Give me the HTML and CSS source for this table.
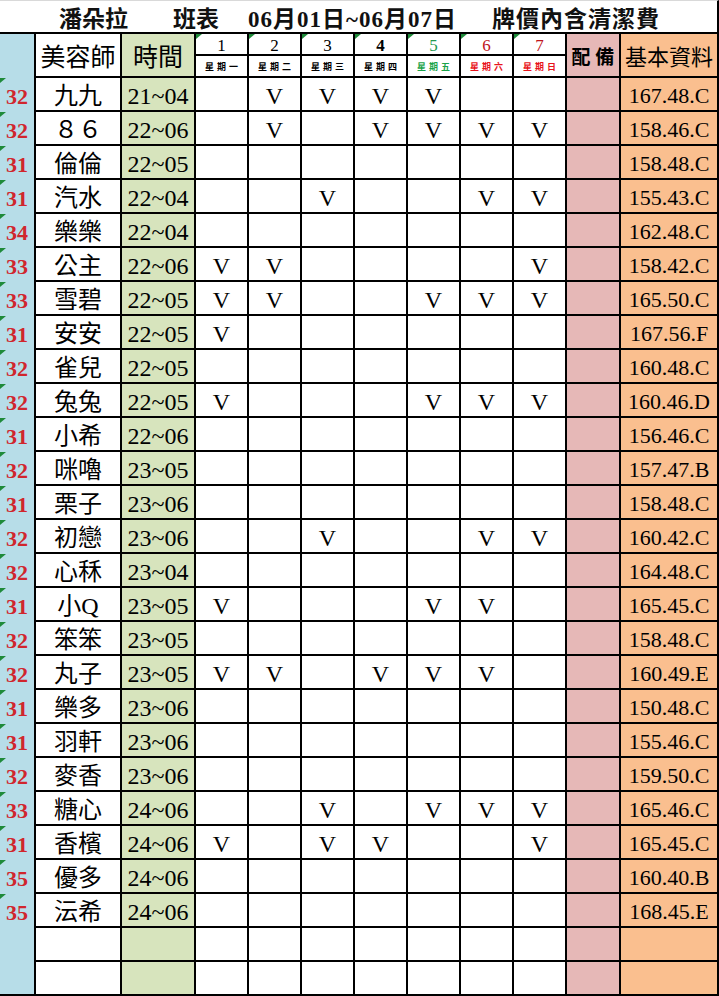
FILE: index.html
```html
<!DOCTYPE html>
<html lang="zh-Hant">
<head>
<meta charset="utf-8">
<title>潘朵拉 班表</title>
<link rel="stylesheet" href="styles.css">
</head>
<body>
<div class="sheet">
  <div class="title">
    <span></span>
    <span class="t-name">潘朵拉</span>
    <span class="t-name">班表</span>
    <span class="t-date">06月01日~06月07日</span>
    <span class="t-note">牌價內含清潔費</span>
  </div>

  <div class="head">
    <div class="c n hn"></div>
    <div class="c hname">美容師</div>
    <div class="c htime t">時間</div>
    <div class="c dn tri">1</div>
    <div class="c dn tri">2</div>
    <div class="c dn tri">3</div>
    <div class="c dn tri bold">4</div>
    <div class="c dn tri green">5</div>
    <div class="c dn tri red">6</div>
    <div class="c dn tri red">7</div>
    <div class="c hp p">配 備</div>
    <div class="c hb b">基本資料</div>
    <div class="c wd">星期一</div>
    <div class="c wd">星期二</div>
    <div class="c wd">星期三</div>
    <div class="c wd">星期四</div>
    <div class="c wd wgreen">星期五</div>
    <div class="c wd wred">星期六</div>
    <div class="c wd wred">星期日</div>
  </div>

  <div class="row"><div class="c n tri">32</div><div class="c nm">九九</div><div class="c t">21~04</div><div class="c d"></div><div class="c d">V</div><div class="c d">V</div><div class="c d">V</div><div class="c d">V</div><div class="c d"></div><div class="c d"></div><div class="c p"></div><div class="c b">167.48.C</div></div>
  <div class="row"><div class="c n tri">32</div><div class="c nm">８６</div><div class="c t">22~06</div><div class="c d"></div><div class="c d">V</div><div class="c d"></div><div class="c d">V</div><div class="c d">V</div><div class="c d">V</div><div class="c d">V</div><div class="c p"></div><div class="c b">158.46.C</div></div>
  <div class="row"><div class="c n tri">31</div><div class="c nm">倫倫</div><div class="c t">22~05</div><div class="c d"></div><div class="c d"></div><div class="c d"></div><div class="c d"></div><div class="c d"></div><div class="c d"></div><div class="c d"></div><div class="c p"></div><div class="c b">158.48.C</div></div>
  <div class="row"><div class="c n tri">31</div><div class="c nm">汽水</div><div class="c t">22~04</div><div class="c d"></div><div class="c d"></div><div class="c d">V</div><div class="c d"></div><div class="c d"></div><div class="c d">V</div><div class="c d">V</div><div class="c p"></div><div class="c b">155.43.C</div></div>
  <div class="row"><div class="c n tri">34</div><div class="c nm">樂樂</div><div class="c t">22~04</div><div class="c d"></div><div class="c d"></div><div class="c d"></div><div class="c d"></div><div class="c d"></div><div class="c d"></div><div class="c d"></div><div class="c p"></div><div class="c b">162.48.C</div></div>
  <div class="row"><div class="c n tri">33</div><div class="c nm">公主</div><div class="c t">22~06</div><div class="c d">V</div><div class="c d">V</div><div class="c d"></div><div class="c d"></div><div class="c d"></div><div class="c d"></div><div class="c d">V</div><div class="c p"></div><div class="c b">158.42.C</div></div>
  <div class="row"><div class="c n tri">33</div><div class="c nm">雪碧</div><div class="c t">22~05</div><div class="c d">V</div><div class="c d">V</div><div class="c d"></div><div class="c d"></div><div class="c d">V</div><div class="c d">V</div><div class="c d">V</div><div class="c p"></div><div class="c b">165.50.C</div></div>
  <div class="row"><div class="c n tri">31</div><div class="c nm">安安</div><div class="c t">22~05</div><div class="c d">V</div><div class="c d"></div><div class="c d"></div><div class="c d"></div><div class="c d"></div><div class="c d"></div><div class="c d"></div><div class="c p"></div><div class="c b">167.56.F</div></div>
  <div class="row"><div class="c n tri">32</div><div class="c nm">雀兒</div><div class="c t">22~05</div><div class="c d"></div><div class="c d"></div><div class="c d"></div><div class="c d"></div><div class="c d"></div><div class="c d"></div><div class="c d"></div><div class="c p"></div><div class="c b">160.48.C</div></div>
  <div class="row"><div class="c n tri">32</div><div class="c nm">兔兔</div><div class="c t">22~05</div><div class="c d">V</div><div class="c d"></div><div class="c d"></div><div class="c d"></div><div class="c d">V</div><div class="c d">V</div><div class="c d">V</div><div class="c p"></div><div class="c b">160.46.D</div></div>
  <div class="row"><div class="c n tri">31</div><div class="c nm">小希</div><div class="c t">22~06</div><div class="c d"></div><div class="c d"></div><div class="c d"></div><div class="c d"></div><div class="c d"></div><div class="c d"></div><div class="c d"></div><div class="c p"></div><div class="c b">156.46.C</div></div>
  <div class="row"><div class="c n tri">32</div><div class="c nm">咪嚕</div><div class="c t">23~05</div><div class="c d"></div><div class="c d"></div><div class="c d"></div><div class="c d"></div><div class="c d"></div><div class="c d"></div><div class="c d"></div><div class="c p"></div><div class="c b">157.47.B</div></div>
  <div class="row"><div class="c n tri">31</div><div class="c nm">栗子</div><div class="c t">23~06</div><div class="c d"></div><div class="c d"></div><div class="c d"></div><div class="c d"></div><div class="c d"></div><div class="c d"></div><div class="c d"></div><div class="c p"></div><div class="c b">158.48.C</div></div>
  <div class="row"><div class="c n tri">32</div><div class="c nm">初戀</div><div class="c t">23~06</div><div class="c d"></div><div class="c d"></div><div class="c d">V</div><div class="c d"></div><div class="c d"></div><div class="c d">V</div><div class="c d">V</div><div class="c p"></div><div class="c b">160.42.C</div></div>
  <div class="row"><div class="c n tri">32</div><div class="c nm">心秝</div><div class="c t">23~04</div><div class="c d"></div><div class="c d"></div><div class="c d"></div><div class="c d"></div><div class="c d"></div><div class="c d"></div><div class="c d"></div><div class="c p"></div><div class="c b">164.48.C</div></div>
  <div class="row"><div class="c n tri">31</div><div class="c nm">小Q</div><div class="c t">23~05</div><div class="c d">V</div><div class="c d"></div><div class="c d"></div><div class="c d"></div><div class="c d">V</div><div class="c d">V</div><div class="c d"></div><div class="c p"></div><div class="c b">165.45.C</div></div>
  <div class="row"><div class="c n tri">32</div><div class="c nm">笨笨</div><div class="c t">23~05</div><div class="c d"></div><div class="c d"></div><div class="c d"></div><div class="c d"></div><div class="c d"></div><div class="c d"></div><div class="c d"></div><div class="c p"></div><div class="c b">158.48.C</div></div>
  <div class="row"><div class="c n tri">32</div><div class="c nm">丸子</div><div class="c t">23~05</div><div class="c d">V</div><div class="c d">V</div><div class="c d"></div><div class="c d">V</div><div class="c d">V</div><div class="c d">V</div><div class="c d"></div><div class="c p"></div><div class="c b">160.49.E</div></div>
  <div class="row"><div class="c n tri">31</div><div class="c nm">樂多</div><div class="c t">23~06</div><div class="c d"></div><div class="c d"></div><div class="c d"></div><div class="c d"></div><div class="c d"></div><div class="c d"></div><div class="c d"></div><div class="c p"></div><div class="c b">150.48.C</div></div>
  <div class="row"><div class="c n tri">31</div><div class="c nm">羽軒</div><div class="c t">23~06</div><div class="c d"></div><div class="c d"></div><div class="c d"></div><div class="c d"></div><div class="c d"></div><div class="c d"></div><div class="c d"></div><div class="c p"></div><div class="c b">155.46.C</div></div>
  <div class="row"><div class="c n tri">32</div><div class="c nm">麥香</div><div class="c t">23~06</div><div class="c d"></div><div class="c d"></div><div class="c d"></div><div class="c d"></div><div class="c d"></div><div class="c d"></div><div class="c d"></div><div class="c p"></div><div class="c b">159.50.C</div></div>
  <div class="row"><div class="c n tri">33</div><div class="c nm">糖心</div><div class="c t">24~06</div><div class="c d"></div><div class="c d"></div><div class="c d">V</div><div class="c d"></div><div class="c d">V</div><div class="c d">V</div><div class="c d">V</div><div class="c p"></div><div class="c b">165.46.C</div></div>
  <div class="row"><div class="c n tri">31</div><div class="c nm">香檳</div><div class="c t">24~06</div><div class="c d">V</div><div class="c d"></div><div class="c d">V</div><div class="c d">V</div><div class="c d"></div><div class="c d"></div><div class="c d">V</div><div class="c p"></div><div class="c b">165.45.C</div></div>
  <div class="row"><div class="c n tri">35</div><div class="c nm">優多</div><div class="c t">24~06</div><div class="c d"></div><div class="c d"></div><div class="c d"></div><div class="c d"></div><div class="c d"></div><div class="c d"></div><div class="c d"></div><div class="c p"></div><div class="c b">160.40.B</div></div>
  <div class="row"><div class="c n tri">35</div><div class="c nm">沄希</div><div class="c t">24~06</div><div class="c d"></div><div class="c d"></div><div class="c d"></div><div class="c d"></div><div class="c d"></div><div class="c d"></div><div class="c d"></div><div class="c p"></div><div class="c b">168.45.E</div></div>
  <div class="row"><div class="c n"></div><div class="c nm"></div><div class="c t"></div><div class="c d"></div><div class="c d"></div><div class="c d"></div><div class="c d"></div><div class="c d"></div><div class="c d"></div><div class="c d"></div><div class="c p"></div><div class="c b"></div></div>
  <div class="row"><div class="c n"></div><div class="c nm"></div><div class="c t"></div><div class="c d"></div><div class="c d"></div><div class="c d"></div><div class="c d"></div><div class="c d"></div><div class="c d"></div><div class="c d"></div><div class="c p"></div><div class="c b"></div></div>
</div>
</body>
</html>
```

FILE: styles.css
```css
html, body {
  margin: 0;
  padding: 0;
  background: #ffffff;
}

.sheet {
  --cols: 34px 86px 74px repeat(7, 53px) 54px 100px;
  width: 719px;
  font-family: "Liberation Serif", "Noto Sans CJK TC", serif;
  color: #000;
}

/* Title row */
.title {
  height: 34px;
  box-sizing: border-box;
  border-top: 1px solid #d9d9d9;
  border-bottom: 2px solid #000;
  border-right: 2px solid #000;
  display: grid;
  grid-template-columns: 59px 114px 75px 244px 1fr;
  align-items: center;
  padding-top: 5px;
  font-size: 23px;
  font-weight: bold;
  line-height: 1;
  color: #111;
}
.title span {
  white-space: nowrap;
}
.t-date {
  letter-spacing: 1px;
}
.t-note {
  letter-spacing: 1px;
}

/* Grid rows */
.head {
  display: grid;
  grid-template-columns: var(--cols);
  grid-template-rows: 22px 22px;
  height: 44px;
}
.row {
  display: grid;
  grid-template-columns: var(--cols);
  height: 34px;
}

/* Cells */
.c {
  box-sizing: border-box;
  border-left: 2px solid #000;
  border-bottom: 2px solid #000;
  display: flex;
  align-items: center;
  justify-content: center;
  padding-top: 4px;
  font-size: 24px;
  line-height: 1;
  white-space: nowrap;
  position: relative;
}
.n {
  border-left: 0;
  border-bottom: 0;
  background: #b7dde8;
  color: #d0262d;
  font-weight: bold;
  font-size: 22px;
}
.row:last-child .n {
  border-bottom: 2px solid #000;
}
.t {
  background: #d7e4bd;
}
.p {
  background: #e6b8b7;
}
.b {
  background: #fabf8f;
  border-right: 2px solid #000;
  font-size: 22px;
}

.tri::before {
  content: "";
  position: absolute;
  top: 0;
  left: 0;
  border-top: 5px solid #1f8a3a;
  border-right: 6px solid transparent;
}

/* Header cells */
.hn, .hname, .htime, .hp, .hb {
  grid-row: span 2;
  padding-top: 5px;
}
.hname, .htime {
  font-size: 25px;
}
.hp {
  font-size: 19px;
  font-weight: bold;
}
.hb {
  font-size: 22px;
}
.dn {
  font-size: 17px;
  padding-top: 2px;
}
.dn.bold {
  font-weight: bold;
}
.dn.green {
  color: #23994f;
}
.dn.red {
  color: #c0141c;
}
.wd {
  font-family: "Noto Sans CJK TC", sans-serif;
  font-size: 9px;
  font-weight: bold;
  letter-spacing: 3px;
  padding-top: 0;
  padding-left: 3px;
}
.wgreen {
  color: #1aa34a;
}
.wred {
  color: #e8141c;
}
```
